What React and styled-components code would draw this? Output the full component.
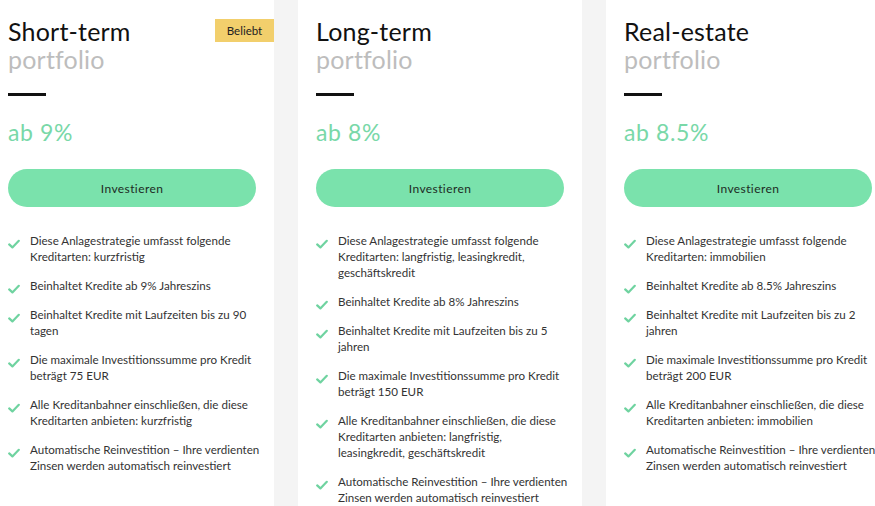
import React from 'react';
import styled, { createGlobalStyle } from 'styled-components';

const Global = createGlobalStyle`
  body {
    margin: 0;
    background: #f4f4f4;
    font-family: 'Lato', 'Open Sans', sans-serif;
  }
`;

const Page = styled.div`
  display: flex;
  gap: 24px;
  height: 506px;
  overflow: hidden;
  margin-left: -10px;
  background: #f4f4f4;
`;

const Card = styled.div`
  position: relative;
  flex: 0 0 284px;
  min-width: 0;
  box-sizing: border-box;
  padding: 17px 18px 0;
  background: #fff;
`;

const Badge = styled.span`
  position: absolute;
  top: 19px;
  right: 0;
  width: 59px;
  height: 23px;
  display: flex;
  align-items: center;
  justify-content: center;
  background: #f2cf6c;
  color: #222;
  font-size: 11.5px;
`;

const Title = styled.h2`
  margin: 0;
  font-size: 25px;
  line-height: 28px;
  font-weight: 400;
  letter-spacing: 0.2px;
  color: #111;
`;

const Sub = styled.span`
  display: block;
  color: #bdbdbd;
`;

const Dash = styled.div`
  width: 38px;
  height: 3px;
  margin-top: 20px;
  background: #111;
`;

const Rate = styled.div`
  margin-top: 23px;
  font-size: 23px;
  line-height: 26px;
  letter-spacing: 0.6px;
  color: #79d8a8;
`;

const Button = styled.button`
  display: block;
  width: 100%;
  height: 38px;
  margin-top: 24px;
  border: none;
  border-radius: 19px;
  background: #7ae2ac;
  color: #1d2b24;
  font-family: inherit;
  font-size: 12px;
  letter-spacing: 0.4px;
  cursor: pointer;
`;

const List = styled.ul`
  list-style: none;
  margin: 26px -4px 0 0;
  padding: 0;
`;

const Item = styled.li`
  display: flex;
  gap: 10px;
  margin-bottom: 13px;
  font-size: 11.6px;
  line-height: 16px;
  color: #333;

  svg {
    flex: 0 0 12px;
    margin-top: 6px;
  }
`;

const Check = () => (
  <svg width="12" height="10" viewBox="0 0 12 10">
    <path d="M1.2 5.4 L4.4 8.4 L10.8 1.8" fill="none" stroke="#6fd3a0" strokeWidth="2.2" strokeLinecap="round" strokeLinejoin="round" />
  </svg>
);

const cards = [
  {
    title: 'Short-term',
    rate: 'ab 9%',
    badge: 'Beliebt',
    items: [
      'Diese Anlagestrategie umfasst folgende Kreditarten: kurzfristig',
      'Beinhaltet Kredite ab 9% Jahreszins',
      'Beinhaltet Kredite mit Laufzeiten bis zu 90 tagen',
      'Die maximale Investitionssumme pro Kredit beträgt 75 EUR',
      'Alle Kreditanbahner einschließen, die diese Kreditarten anbieten: kurzfristig',
      'Automatische Reinvestition – Ihre verdienten Zinsen werden automatisch reinvestiert',
    ],
  },
  {
    title: 'Long-term',
    rate: 'ab 8%',
    items: [
      'Diese Anlagestrategie umfasst folgende Kreditarten: langfristig, leasingkredit, geschäftskredit',
      'Beinhaltet Kredite ab 8% Jahreszins',
      'Beinhaltet Kredite mit Laufzeiten bis zu 5 jahren',
      'Die maximale Investitionssumme pro Kredit beträgt 150 EUR',
      'Alle Kreditanbahner einschließen, die diese Kreditarten anbieten: langfristig, leasingkredit,\u00a0geschäftskredit',
      'Automatische Reinvestition – Ihre verdienten Zinsen werden automatisch reinvestiert',
    ],
  },
  {
    title: 'Real-estate',
    rate: 'ab 8.5%',
    items: [
      'Diese Anlagestrategie umfasst folgende Kreditarten: immobilien',
      'Beinhaltet Kredite ab 8.5% Jahreszins',
      'Beinhaltet Kredite mit Laufzeiten bis zu 2 jahren',
      'Die maximale Investitionssumme pro Kredit beträgt 200 EUR',
      'Alle Kreditanbahner einschließen, die diese Kreditarten anbieten: immobilien',
      'Automatische Reinvestition – Ihre verdienten Zinsen werden automatisch reinvestiert',
    ],
  },
];

const App = () => (
  <>
    <Global />
    <Page>
      {cards.map((card) => (
        <Card key={card.title}>
          {card.badge && <Badge>{card.badge}</Badge>}
          <Title>
            {card.title}
            <Sub>portfolio</Sub>
          </Title>
          <Dash />
          <Rate>{card.rate}</Rate>
          <Button>Investieren</Button>
          <List>
            {card.items.map((text) => (
              <Item key={text}>
                <Check />
                <span>{text}</span>
              </Item>
            ))}
          </List>
        </Card>
      ))}
    </Page>
  </>
);

export default App;
